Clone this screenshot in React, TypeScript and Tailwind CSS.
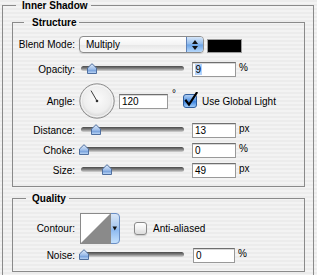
import React from 'react';

// Aqua-style slider: dark rounded track with a blue "house" thumb
const Thumb: React.FC = () => (
  <svg width="10" height="11" viewBox="0 0 10 11" className="block">
    <defs>
      <linearGradient id="thumbFill" x1="0" y1="0" x2="0" y2="1">
        <stop offset="0" stopColor="#e4eefb" />
        <stop offset="0.55" stopColor="#9dbde9" />
        <stop offset="0.7" stopColor="#7ea6de" />
        <stop offset="1" stopColor="#c4dcf8" />
      </linearGradient>
    </defs>
    <path d="M0.5 10.5 L0.5 5 L5 0.7 L9.5 5 L9.5 10.5 Z" fill="url(#thumbFill)" stroke="#4f6f9f" strokeWidth="1" />
  </svg>
);

const Slider: React.FC<{ thumb: string }> = ({ thumb }) => (
  <div className="relative w-[109px] h-[15px] shrink-0">
    <div className="absolute left-[2px] top-[4px] w-[103px] h-[5px] rounded-full bg-[linear-gradient(to_bottom,#4a4a4a,#7c7c7c_45%,#b4b4b4_80%,#d6d6d6)]" />
    <div className={`absolute top-[1px] ${thumb}`}>
      <Thumb />
    </div>
  </div>
);

const Label: React.FC<{ children: React.ReactNode }> = ({ children }) => (
  <div className="w-[62px] shrink-0 text-right whitespace-nowrap">{children}</div>
);

const Field: React.FC<{ value: string; width: string; selected?: boolean }> = ({ value, width, selected }) => (
  <div className={`${width} h-[15px] shrink-0 bg-white border border-[#999999] border-t-[#6f6f6f] pl-[2px] leading-[13px] shadow-[inset_0_1px_0_#d8d8d8]`}>
    {selected ? <span className="bg-[#b4d3fb] px-[0.5px]">{value}</span> : value}
  </div>
);

const SliderRow: React.FC<{
  label: string;
  thumb: string;
  value: string;
  unit: string;
  className?: string;
  selected?: boolean;
}> = ({ label, thumb, value, unit, className, selected }) => (
  <div className={`flex items-center h-[15px] ${className ?? ''}`}>
    <Label>{label}</Label>
    <div className="ml-[4px]">
      <Slider thumb={thumb} />
    </div>
    <div className="ml-[4px]">
      <Field value={value} width="w-[44px]" selected={selected} />
    </div>
    <div className="ml-[3px] self-start leading-[12px]">{unit}</div>
  </div>
);

const PopUp: React.FC = () => (
  <div className="flex w-[125px] h-[17px] rounded-[4px] border border-[#8c8c8c] overflow-hidden bg-[linear-gradient(to_bottom,#ffffff,#f4f4f4_50%,#e6e6e6_52%,#f8f8f8)] shadow-[0_1px_1px_rgba(0,0,0,0.12)]">
    <div className="flex-1 pl-[6px] leading-[15px]">Multiply</div>
    <div className="w-[17px] flex flex-col items-center justify-center gap-[2px] border-l border-[#5f82b8] bg-[linear-gradient(to_bottom,#d6e6f8,#8fbaec_48%,#6aa3e6_52%,#b6d8fb)]">
      <svg width="6" height="4" viewBox="0 0 6 4" className="block">
        <path d="M0 4 L3 0 L6 4 Z" fill="#111" />
      </svg>
      <svg width="6" height="4" viewBox="0 0 6 4" className="block">
        <path d="M0 0 L6 0 L3 4 Z" fill="#111" />
      </svg>
    </div>
  </div>
);

const AngleDial: React.FC = () => (
  <svg width="36" height="36" viewBox="0 0 36 36" className="block shrink-0">
    <defs>
      <radialGradient id="dialFill" cx="0.5" cy="0.45" r="0.55">
        <stop offset="0" stopColor="#fbfbfb" />
        <stop offset="0.7" stopColor="#eeeeee" />
        <stop offset="1" stopColor="#cfcfcf" />
      </radialGradient>
    </defs>
    <circle cx="18" cy="18" r="17.2" fill="url(#dialFill)" stroke="#8e8e8e" strokeWidth="1" />
    <circle cx="18" cy="18" r="15.8" fill="none" stroke="#ffffff" strokeOpacity="0.7" strokeWidth="1" />
    <line x1="18" y1="18" x2="12" y2="7.6" stroke="#3c3c3c" strokeWidth="1" />
    <circle cx="18" cy="18" r="1.3" fill="#333" />
  </svg>
);

const CheckedBox: React.FC = () => (
  <svg width="15" height="16" viewBox="0 0 15 16" className="block shrink-0">
    <defs>
      <linearGradient id="cbFill" x1="0" y1="0" x2="0" y2="1">
        <stop offset="0" stopColor="#b9d4f4" />
        <stop offset="0.45" stopColor="#5e9be6" />
        <stop offset="0.55" stopColor="#3f85e0" />
        <stop offset="1" stopColor="#a9d3fb" />
      </linearGradient>
    </defs>
    <rect x="0.5" y="2.5" width="13" height="13" rx="2.5" fill="url(#cbFill)" stroke="#2f5d9c" />
    <path d="M3 8.6 L6 12.6 L13.6 1" fill="none" stroke="#000" strokeWidth="2.2" strokeLinecap="square" />
  </svg>
);

const ContourPicker: React.FC = () => (
  <svg width="40" height="31" viewBox="0 0 40 31" className="block shrink-0">
    <defs>
      <linearGradient id="ctBtn" x1="0" y1="0" x2="0" y2="1">
        <stop offset="0" stopColor="#dbe8f7" />
        <stop offset="0.45" stopColor="#a9c8ee" />
        <stop offset="0.55" stopColor="#8ebaf0" />
        <stop offset="1" stopColor="#c6e2fd" />
      </linearGradient>
    </defs>
    <path d="M30 0.5 H36 Q39.5 0.5 39.5 4 V27 Q39.5 30.5 36 30.5 H30 Z" fill="url(#ctBtn)" stroke="#6a8ec4" />
    <rect x="0.5" y="0.5" width="30" height="30" fill="#ffffff" stroke="#8a8a8a" />
    <polygon points="1,30 30,1 30,30" fill="#8a8a8a" />
    <polygon points="32.5,13.5 37,13.5 34.75,17.5" fill="#111" />
  </svg>
);

const App: React.FC = () => {
  return (
    <div className="w-[317px] h-[275px] overflow-hidden font-['Liberation_Sans',Arial,sans-serif] text-[10px] text-black bg-[repeating-linear-gradient(to_bottom,#ececec_0px,#ececec_2px,#f3f3f3_2px,#f3f3f3_4px)]">
      <fieldset className="ml-[2px] w-[312px] h-[300px] border border-[#8a8a8a] pt-[6px]">
        <legend className="ml-[13px] pl-[6px] pr-[3px] font-bold leading-[11px]">Inner Shadow</legend>

        {/* Structure */}
        <fieldset className="ml-[9px] w-[293px] border border-[#8a8a8a] pt-[8px] pb-[8px]">
          <legend className="ml-[11px] pl-[8px] pr-[3px] font-bold leading-[11px]">Structure</legend>

          <div className="flex items-end h-[17px]">
            <div className="self-center">
              <Label>Blend Mode:</Label>
            </div>
            <div className="ml-[4px]">
              <PopUp />
            </div>
            <div className="ml-[3px] w-[35px] h-[14px] bg-black border border-[#9c9c9c]" />
          </div>

          <SliderRow className="mt-[9px]" label="Opacity:" thumb="left-[8px]" value="9" unit="%" selected />

          <div className="mt-[6px] flex items-center h-[36px]">
            <Label>Angle:</Label>
            <div className="ml-[4px]">
              <AngleDial />
            </div>
            <div className="ml-[4px]">
              <Field value="120" width="w-[49px]" />
            </div>
            <div className="w-[15px] self-start mt-[6px] pl-[4px] leading-[10px]">°</div>
            <div className="-mt-[3px]">
              <CheckedBox />
            </div>
            <div className="ml-[4px] whitespace-nowrap">Use Global Light</div>
          </div>

          <SliderRow className="mt-[4px]" label="Distance:" thumb="left-[12px]" value="13" unit="px" />
          <SliderRow className="mt-[5px]" label="Choke:" thumb="left-[0px]" value="0" unit="%" />
          <SliderRow className="mt-[5px]" label="Size:" thumb="left-[23px]" value="49" unit="px" />
        </fieldset>

        {/* Quality */}
        <fieldset className="mt-[6px] ml-[9px] w-[293px] border border-[#8a8a8a] pt-[9px] pb-[8px]">
          <legend className="ml-[13px] pl-[6px] pr-[3px] font-bold leading-[11px]">Quality</legend>

          <div className="flex items-center h-[31px]">
            <Label>Contour:</Label>
            <div className="ml-[5px]">
              <ContourPicker />
            </div>
            <div className="ml-[14px] w-[13px] h-[13px] rounded-[3px] border border-[#8a8a8a] bg-[linear-gradient(to_bottom,#ffffff,#f0f0f0_50%,#dcdcdc)] shadow-[0_1px_1px_rgba(0,0,0,0.15)]" />
            <div className="ml-[6px] whitespace-nowrap">Anti-aliased</div>
          </div>

          <div className="mt-[4px] flex items-center h-[15px]">
            <Label>Noise:</Label>
            <div className="ml-[4px]">
              <Slider thumb="left-[0px]" />
            </div>
            <div className="ml-[5px]">
              <Field value="0" width="w-[42px]" />
            </div>
            <div className="ml-[3px] self-start leading-[12px]">%</div>
          </div>
        </fieldset>
      </fieldset>
    </div>
  );
};

export default App;
